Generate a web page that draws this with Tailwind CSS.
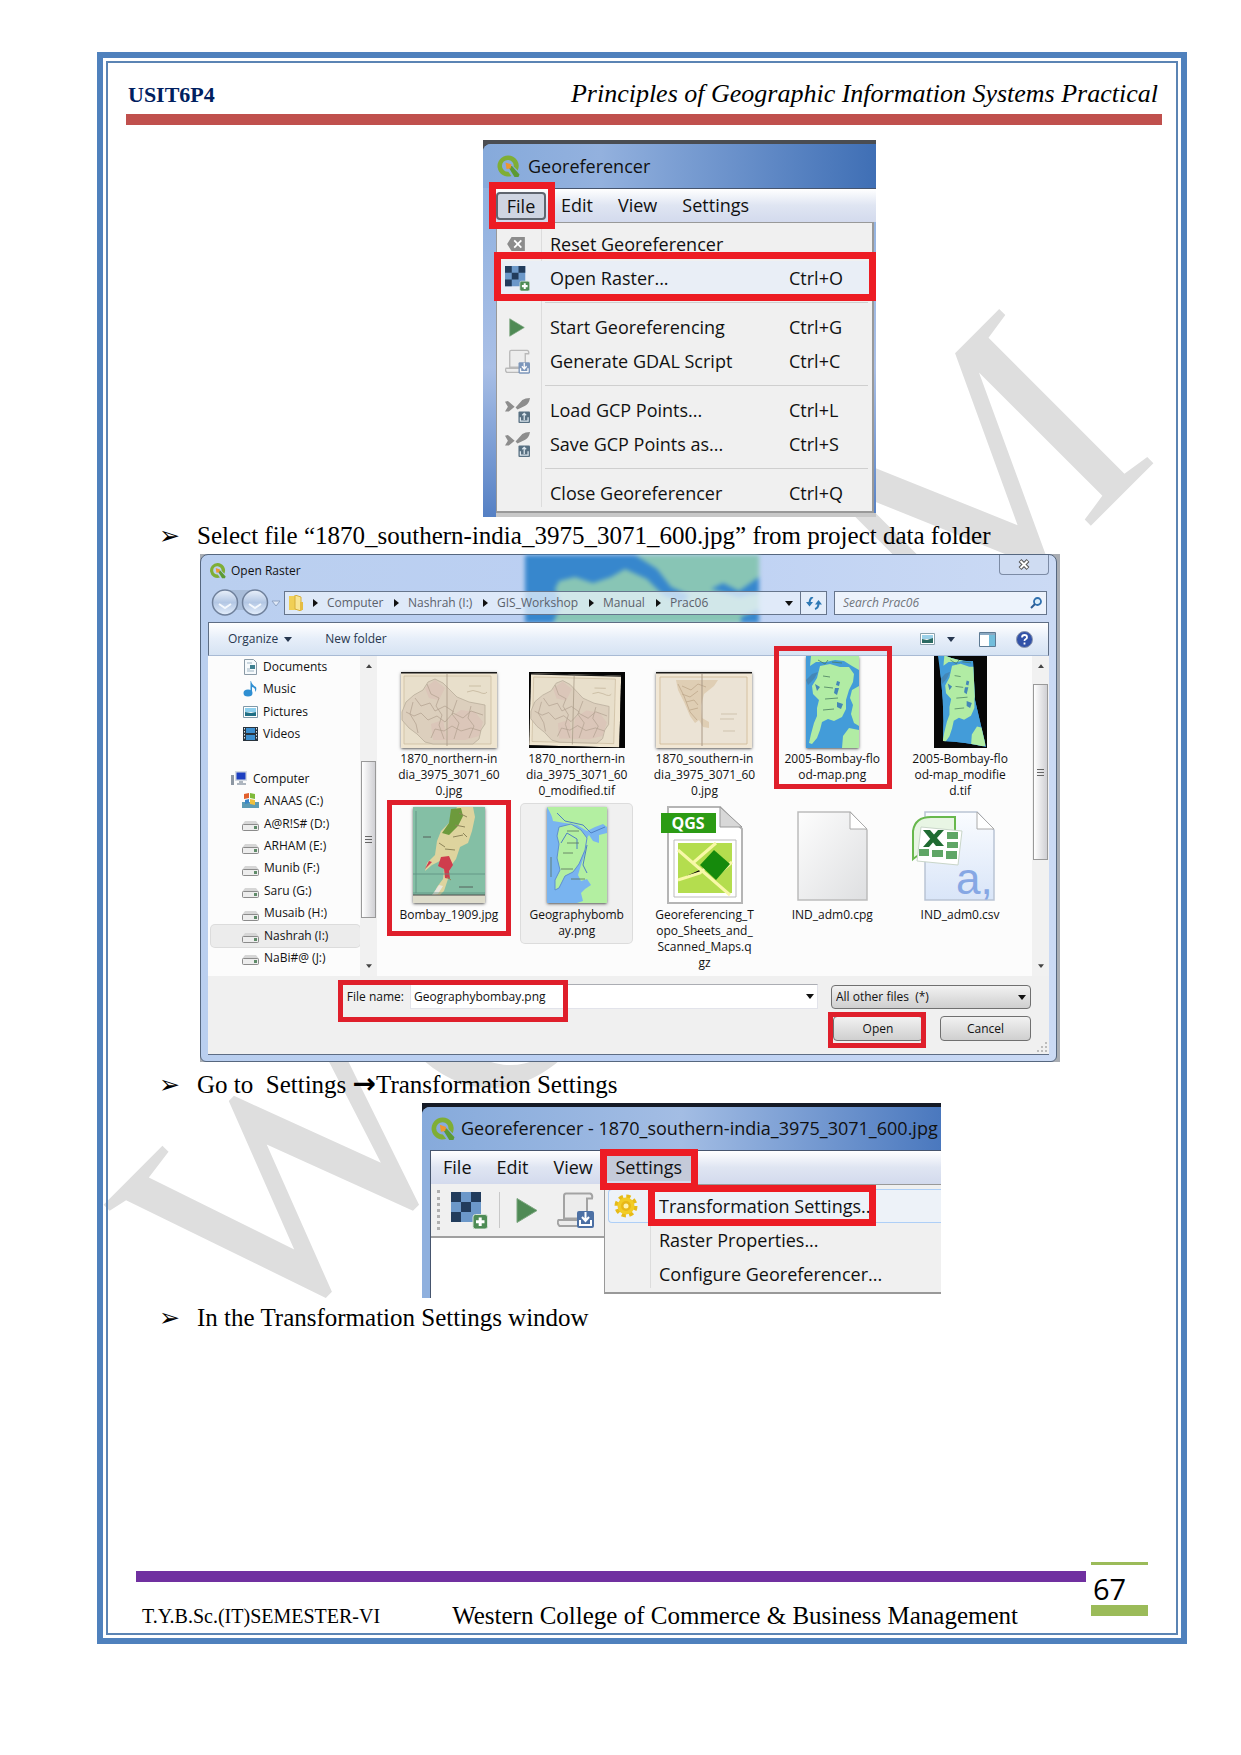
<!DOCTYPE html>
<html lang="en">
<head>
<meta charset="utf-8">
<meta name="viewport" content="width=device-width, initial-scale=1">
<title>Principles of Geographic Information Systems Practical</title>
<script src="https://cdn.jsdelivr.net/npm/@tailwindcss/browser@4"></script>
</head>
<body class="bg-white text-black font-['Liberation_Serif',serif]">

<!-- shared icons -->
<svg class="absolute size-0" aria-hidden="true">
  <defs>
    <linearGradient id="paper" x1="0" y1="0" x2="1" y2="1"><stop offset="0" stop-color="#fdfdfd"/><stop offset="1" stop-color="#dedfe1"/></linearGradient>
    <linearGradient id="csvpaper" x1="0" y1="0" x2="0" y2="1"><stop offset="0" stop-color="#fafcff"/><stop offset="1" stop-color="#d9e5f8"/></linearGradient>
    <linearGradient id="orb" x1="0" y1="0" x2="0" y2="1"><stop offset="0" stop-color="#e9f0fa"/><stop offset=".5" stop-color="#b3c7e4"/><stop offset="1" stop-color="#e4eefc"/></linearGradient>
    <symbol id="qgis" viewBox="0 0 24 24">
      <path d="M12 1.500a10.500 10.500 0 1 0 3.500 20.400l-3.200-4.200a5.900 5.900 0 1 1 5.400-5.200l4 4A10.500 10.500 0 0 0 12 1.500z" fill="#7fae35"/>
      <path d="M12 12.500l4-.5 7.500 8.500-1 2.500h-4z" fill="#5c9a34"/>
      <path d="M9.500 8.500l6 2-1 4-4 .5z" fill="#f0962f"/>
    </symbol>
    <symbol id="raster" viewBox="0 0 37 37">
      <path d="M0 0h30v30H0z" fill="#6c98c9"/>
      <path d="M0 0h10v10H0zM20 0h10v10H20zM10 10h10v10H10zM0 20h10v10H0z" fill="#223c5c"/>
      <rect x="22" y="22.500" width="14.500" height="14.500" rx="2.500" fill="#4e8c55" stroke="#d5e2d6"/>
      <path d="M29.200 25.500v8.500M25 29.800h8.500" stroke="#fff" stroke-width="3"/>
    </symbol>
    <symbol id="play" viewBox="0 0 22 26"><path d="M1 1l20 12L1 25z" fill="#4f8a55" stroke="#7aa57e"/></symbol>
    <symbol id="script" viewBox="0 0 37 36">
      <path d="M9 1.500h24q3 1 2 5h-5v20H7V4q0-2.500 2-2.500zM1.500 28h21v6h-20q-3-3-1-6z" fill="#ececec" stroke="#a3a3a3" stroke-width="2"/>
      <rect x="20" y="19" width="17" height="17" rx="2" fill="#4c70a4"/>
      <path d="M23 28v5h11v-5M28.500 20v8M25 25l3.500 4 3.500-4" fill="none" stroke="#fff" stroke-width="2"/>
    </symbol>
    <symbol id="reset" viewBox="0 0 22 18"><path d="M6 1h15v16H6L1 9z" fill="#8c8c8c"/><path d="M9 5l8 8M17 5l-8 8" stroke="#fff" stroke-width="2"/></symbol>
    <symbol id="gcp" viewBox="0 0 26 26">
      <path d="M0 4l3-1 7 6-6 5H0l3-5zM11 10l7-8q3-2 8-2-1 6-5 8l-8 4z" fill="#8d8d8d"/>
      <rect x="14" y="14" width="12" height="12" rx="1" fill="#587082"/>
      <path d="M16 20v4h8v-4M20 23v-7M18 18l2-2 2 2" fill="none" stroke="#dbe6ee" stroke-width="1.300"/>
    </symbol>
    <symbol id="gear" viewBox="0 0 24 24">
      <circle cx="12" cy="12" r="9.500" fill="none" stroke="#e6bb18" stroke-width="4" stroke-dasharray="4.200 3.260"/>
      <circle cx="12" cy="12" r="8.500" fill="#f2cc25"/><circle cx="12" cy="12" r="5" fill="#e8b818"/><circle cx="12" cy="12" r="2.500" fill="#fff3b0"/>
    </symbol>
    <symbol id="drive" viewBox="0 0 17 11"><path d="M3 1h11l3 4v5H0V5z" fill="#d6d6d6"/><rect x=".5" y="4.500" width="16" height="6" rx="1" fill="#ededed" stroke="#8b8b8b"/><path d="M12 6h3v3h-3z" fill="#5f8b69"/></symbol>
    <symbol id="oldmap" viewBox="0 0 96 76">
      <path d="M0 0h96v76H0z" fill="#efe5d0"/><path d="M0 0h96v1.500H0z" fill="#1a1a1a"/>
      <path d="M3 4h87v68H3z" fill="#e8dfcb" stroke="#c9b99c" stroke-width=".7"/>
      <path d="M1 40l4-10 8-7 9-5 5-8 7-3 8 4 8 8 6 6 12 5 16 3v19l-4 6-2 9-6 5H32l-8-2-8-8-8-6-7-8z" fill="#dccfbd" stroke="#b9ad9b" stroke-width=".8"/>
      <path d="M48 46l12-8 14 2 8 10-4 14-14 4H46zM30 52l12-4 4 20H32zM24 16l10-8 10 8-6 12-10-2z" fill="#dabfb6" opacity=".6"/>
      <path d="M5 40l8 4 7-3 7 7 9-4 8 6 8-9 10 5 8-7 12 4M14 26l6 8 9-3 5 8 10-5 9 6M26 12l4 10 8 4-3 8 6 9-3 10 5 14M56 28l-5 14 7 9-5 16M70 34l-3 12 6 8-5 12M12 30l-3 12 6 10 2 9M30 66l4-9 9 2 8-5 9 5 10-3 10 3" fill="none" stroke="#b09f8e" stroke-width=".7"/>
      <path d="M68 14h12M66 20q6-3 12 0t8 0" stroke="#c4b69c" fill="none" stroke-width=".8"/>
      <path d="M46 2v72" stroke="#a99b88" stroke-width=".8"/>
    </symbol>
    <symbol id="southmap" viewBox="0 0 96 76">
      <path d="M0 0h96v76H0z" fill="#f1e7d5"/><path d="M0 0h96v1.500H0z" fill="#1a1a1a"/>
      <path d="M4 5h87v67H4z" fill="#ebe3d5" stroke="#cfb995" stroke-width=".8"/>
      <path d="M20 8h42l-4 6-10 8-3 12 1 12 7 4v6l-6-1-4-7-4 3-5-7-6-14-6-12z" fill="#dfceb4"/>
      <path d="M22 12l6 12 6 16 7 8M26 14l9 4 7-6 8 3M26 22l8 3 8-6M30 30l8-2 4 5M34 38l8-2" fill="none" stroke="#bfa88b" stroke-width=".8"/><path d="M46 2v72" stroke="#aa9986"/>
      <path d="M65 42h16M64 47h14M67 59h12" stroke="#c8bba5" stroke-width=".8"/>
    </symbol>
    <symbol id="bombay" viewBox="0 0 53 92">
      <path d="M0 0h53v92H0z" fill="#439cd9"/>
      <path d="M5 0h48v14l-7-4-8-5-9-1-9 2-10 0-6 4z" fill="#b1eca4"/>
      <path d="M46 34l7-4v40l-5-3-3-9 2-9-3-7zM37 80l6-8 10 2v18H36z" fill="#b1eca4"/>
      <path d="M14 10l10-2 10 3 9 0 5 7-1 8-4 8-3 10 0 9-4 8-8 4-6-2-6 3-2 8-3 8-5 6-3-1 2-9 3-11 3-7 0-8 2-8-6-6-1-8 5-8z" fill="#b1eca4"/>
      <path d="M0 24l6-6 6-2-4 7-6 6zM31 25l3 1-1 4-3-1zM29 32l4 0-2 7-3-2zM9 28l5 3-3 4zM31 46l6 2-2 5-4-2z" fill="#4487b7"/>
      <path d="M17 20l7 1M18 31l9 1M19 43l13-1M17 54l11-1M26 6l10 1M12 4l7 4 3-4" stroke="#4a7d60" stroke-width=".8" fill="none"/>
    </symbol>
    <symbol id="tri" viewBox="0 0 8 5"><path d="M0 0h8L4 5z" fill="currentColor"/></symbol>
    <symbol id="chev" viewBox="0 0 5 8"><path d="M0 0l5 4-5 4z" fill="#111"/></symbol>
  </defs>
</svg>

<div class="relative flex min-h-screen flex-col pt-[52px] pr-[54px] pb-[111px] pl-[97px]">

  <svg class="pointer-events-none absolute inset-0 h-full w-full" aria-hidden="true">
    <text x="632" y="942" text-anchor="middle" transform="rotate(-45 629 832)" font-family="Liberation Serif, serif" font-size="333" fill="#dedede">WCCBM</text>
  </svg>

  <div class="relative flex flex-1 flex-col border-[6px] border-[#4f81bd] p-[3px]">
  <div class="flex flex-1 flex-col border-2 border-[#5b84b4] pr-[14px] pl-[18px]">

    <header class="flex h-[62px] items-end justify-between border-b-[11px] border-[#c0504d] pr-1 pb-1 pl-[2px]">
      <span class="text-[22px] leading-[30px] font-bold text-[#002060]">USIT6P4</span>
      <span class="text-[26px] leading-[32px] italic">Principles of Geographic Information Systems Practical</span>
    </header>

    <main class="mt-[15px] flex-1 pl-[71px] text-[25px]">

      <!-- Georeferencer: File menu -->
      <figure class="relative mx-auto h-[377px] w-[393px] overflow-hidden bg-[#4a4d52] pt-1 font-['Open_Sans',sans-serif] text-[18px] text-[#111]">
        <div class="flex h-full flex-col rounded-tl-lg bg-linear-to-b from-[#8aaede] via-[#a9bfe6] via-60% to-[#5580c4] pl-[13px]">
          <div class="-ml-[13px] flex h-11 shrink-0 items-center gap-2 rounded-tl-lg bg-linear-to-r from-[#86aadb] via-[#93b1de] via-30% to-[#3f6fb5] pl-[13px]">
            <svg class="size-6"><use href="#qgis"/></svg><span>Georeferencer</span>
          </div>
          <div class="flex h-[34px] shrink-0 items-center border-t border-[#46556e] bg-linear-to-b from-white via-[#dfe5f2] via-50% to-[#d3daed]">
            <button class="h-7 w-[50px] rounded-sm border-2 border-[#5f656f] bg-[#cfd5e2] leading-[24px]">File</button>
            <button class="ml-[15px]">Edit</button>
            <button class="ml-[25px]">View</button>
            <button class="ml-[25px]">Settings</button>
          </div>
          <div class="relative mr-[2px] h-[291px] shrink-0 border border-r-2 border-b-2 border-[#999] bg-[#f0f0f0] py-1">
            <span class="absolute inset-y-1 left-11 w-px bg-[#dcdcdc]"></span>
            <ul class="relative leading-[34px]">
              <li class="flex h-[34px] items-center pl-2"><svg class="h-4 w-[22px]"><use href="#reset"/></svg><button class="ml-[23px]">Reset Georeferencer</button></li>
              <li class="grid h-[34px] grid-cols-[45px_239px_1fr] items-center bg-[#e9eef6] pl-2"><svg class="size-[25px]"><use href="#raster"/></svg><button class="text-left">Open Raster...</button><span>Ctrl+O</span></li>
              <li class="mr-1 ml-12 h-[15px] pt-[7px]"><div class="border-t border-[#cfcfcf]"></div></li>
              <li class="grid h-[34px] grid-cols-[45px_239px_1fr] items-center pl-2"><svg class="ml-1 h-[19px] w-4"><use href="#play"/></svg><button class="text-left">Start Georeferencing</button><span>Ctrl+G</span></li>
              <li class="grid h-[34px] grid-cols-[45px_239px_1fr] items-center pl-2"><svg class="size-[25px] opacity-70"><use href="#script"/></svg><button class="text-left">Generate GDAL Script</button><span>Ctrl+C</span></li>
              <li class="mr-1 ml-12 h-[15px] pt-[7px]"><div class="border-t border-[#cfcfcf]"></div></li>
              <li class="grid h-[34px] grid-cols-[45px_239px_1fr] items-center pl-2"><svg class="size-[25px]"><use href="#gcp"/></svg><button class="text-left">Load GCP Points...</button><span>Ctrl+L</span></li>
              <li class="grid h-[34px] grid-cols-[45px_239px_1fr] items-center pl-2"><svg class="size-[25px]"><use href="#gcp"/></svg><button class="text-left">Save GCP Points as...</button><span>Ctrl+S</span></li>
              <li class="mr-1 ml-12 h-[15px] pt-[7px]"><div class="border-t border-[#cfcfcf]"></div></li>
              <li class="grid h-[34px] grid-cols-[45px_239px_1fr] items-center pl-2"><span></span><button class="text-left">Close Georeferencer</button><span>Ctrl+Q</span></li>
            </ul>
          </div>
          <div class="flex-1 bg-[#c8c8c8]"></div>
        </div>
        <span class="absolute top-[42px] left-[6px] h-[47px] w-[66px] border-[7px] border-[#ed1c24]"></span>
        <span class="absolute top-[112px] left-[11px] h-[49px] w-[382px] border-[7px] border-[#ed1c24]"></span>
      </figure>

      <p class="relative h-[37px] leading-[37px]"><span class="absolute -left-[38px] font-['DejaVu_Sans',sans-serif]">➢</span>Select file “1870_southern-india_3975_3071_600.jpg” from project data folder</p>

      <!-- Open Raster dialog -->
      <figure class="relative ml-[3px] h-[508px] w-[860px] overflow-hidden bg-[#a9adb3] pr-[3px] font-['Open_Sans',sans-serif] text-[12px] text-[#111]">
        <div class="relative flex h-full flex-col rounded-t-lg rounded-b-md border border-[#56677f] bg-linear-to-r from-[#bacfef] via-[#bcd0f3] to-[#cbdaf4] px-[7px] pb-[6px]">
          <svg class="absolute top-0 left-[324px] h-[68px] w-[234px] blur-[2px]" viewBox="0 0 234 68" preserveAspectRatio="none" aria-hidden="true">
            <path d="M0 0h234v68H0z" fill="#88c5b5"/>
            <path d="M0 0h110l22 14 14 18 18 8-6 8-20-8-16-16-22-10-14 8-18 6-18-6-16 4-4 8 6 16-8 18H0zM186 34l12-6 16 8 20-14v16l-20 4zM216 62l18-8v14h-18z" fill="#3787cd"/>
          </svg>

          <div class="relative flex h-9 shrink-0 items-start justify-between">
            <div class="flex h-[31px] items-center gap-[5px] pl-[1px]"><svg class="size-[17px]"><use href="#qgis"/></svg><span>Open Raster</span></div>
            <button aria-label="Close" class="flex h-5 w-[50px] items-center justify-center rounded-b-sm border border-t-0 border-[#7c8ba5] bg-[#cfdcf2]">
              <svg class="h-[11px] w-3" viewBox="0 0 12 11"><path d="M2 1.500l8 8M10 1.500l-8 8" stroke="#555" stroke-width="4"/><path d="M2.500 2l7 7M9.500 2l-7 7" stroke="#fff" stroke-width="2"/></svg>
            </button>
          </div>

          <div class="relative flex h-[31px] shrink-0 items-start text-[#5b616b]">
            <svg class="ml-[3px] -mt-0.5 h-[27px] w-[73px] shrink-0" viewBox="0 0 73 27" aria-label="Back and forward">
              <path d="M13 1h30v20H13z" fill="#a9bdd9"/>
              <circle cx="14" cy="13.500" r="12.500" fill="url(#orb)" stroke="#6f809b" stroke-width="1.500"/><circle cx="44" cy="13.500" r="12.500" fill="url(#orb)" stroke="#6f809b" stroke-width="1.500"/>
              <path d="M8 15l6 4 6-4M38 15l6 4 6-4" fill="none" stroke="#f4f8fd" stroke-width="2"/><path d="M61 12h8l-4 5z" fill="#dfe8f6" stroke="#90a4c4"/>
            </svg>
            <div class="flex h-6 w-[543px] items-center border border-[#66758c] bg-[#eaf1fb]/75 pl-1">
              <svg class="h-4 w-[15px]" viewBox="0 0 15 16"><path d="M0 1h7v14H0z" fill="#f0cf55"/><path d="M6 0l6 2v14l-6-2z" fill="#f8e594" stroke="#d6ae3a"/><path d="M11 7h3v8h-3z" fill="#e5bd43"/></svg>
              <ol class="ml-[9px] grid grid-cols-[81px_89px_106px_67px_1fr]">
                <li class="flex items-center gap-[9px]"><svg class="h-2 w-[5px]"><use href="#chev"/></svg><a href="#">Computer</a></li>
                <li class="flex items-center gap-[9px]"><svg class="h-2 w-[5px]"><use href="#chev"/></svg><a href="#">Nashrah (I:)</a></li>
                <li class="flex items-center gap-[9px]"><svg class="h-2 w-[5px]"><use href="#chev"/></svg><a href="#">GIS_Workshop</a></li>
                <li class="flex items-center gap-[9px]"><svg class="h-2 w-[5px]"><use href="#chev"/></svg><a href="#">Manual</a></li>
                <li class="flex items-center gap-[9px]"><svg class="h-2 w-[5px]"><use href="#chev"/></svg><a href="#">Prac06</a></li>
              </ol>
              <svg class="mr-[7px] ml-auto h-[5px] w-2 text-[#111]"><use href="#tri"/></svg>
              <button aria-label="Refresh" class="flex h-full w-[26px] items-center justify-center border-l border-[#66758c] bg-[#e3edfa]">
                <svg class="h-[13px] w-4" viewBox="0 0 16 13"><path d="M7 0Q3.500 1 3.500 7M9 12q3.500-1 3.500-6" fill="none" stroke="#2e79b5" stroke-width="2"/><path d="M0 5h7L3.500 9.500zM9 7.500h7L12.500 3z" fill="#2e79b5"/></svg>
              </button>
            </div>
            <label class="ml-[7px] flex h-6 w-[213px] items-center border border-[#66758c] bg-[#edf3fc] pr-1 pl-2">
              <input type="text" aria-label="Search" placeholder="Search Prac06" class="min-w-0 flex-1 italic placeholder:text-[#70757d]">
              <svg class="size-3" viewBox="0 0 12 12"><circle cx="7.500" cy="4.500" r="3.500" fill="#dceefa" stroke="#2f6fae" stroke-width="1.800"/><path d="M5 7l-4 4" stroke="#2c5c93" stroke-width="2"/></svg>
            </label>
          </div>

          <div class="relative flex h-[34px] shrink-0 items-center border border-[#5e6d84] border-b-[#a8bad4] bg-linear-to-b from-white via-[#e6eef9] via-50% to-[#d6e3f3] pl-[19px] text-[#27374f]">
            <button class="flex items-center gap-[6px]">Organize <svg class="h-[5px] w-2"><use href="#tri"/></svg></button>
            <button class="ml-[33px]">New folder</button>
            <svg class="ml-auto h-3 w-[15px]" viewBox="0 0 15 12"><path d="M.5.5h14v11H.5z" fill="#fff" stroke="#8ba3ae"/><path d="M2 2h11v4H2z" fill="#9bd0e8"/><path d="M2 6l5 1 6-2v5H2z" fill="#2b6a62"/></svg>
            <svg class="ml-3 h-[5px] w-2"><use href="#tri"/></svg>
            <svg class="ml-6 h-[15px] w-[17px]" viewBox="0 0 17 15"><path d="M.5.5h16v14H.5z" fill="#fff" stroke="#5d7a93"/><path d="M1 1h15v2H1z" fill="#8ba9c2"/><path d="M10 3h6v11h-6z" fill="#72bddb"/></svg>
            <svg class="mr-[15px] ml-5 size-[17px]" viewBox="0 0 17 17"><circle cx="8.500" cy="8.500" r="8" fill="#3252a8" stroke="#8d97ac"/><path d="M6 6.500q0-2.500 2.500-2.500t2.500 2.200q0 1.300-1.500 2-1 .5-1 1.800M8.500 11.500v2" fill="none" stroke="#fff" stroke-width="1.800"/></svg>
          </div>

          <div class="flex h-[320px] shrink-0 bg-[#fcfcfc]">
            <ul class="flex w-[152px] flex-col justify-between pb-[7px] pl-[3px] leading-[22px]">
              <li class="flex h-[22px] items-center gap-[5px] pl-[32px]"><svg class="h-4 w-[15px]" viewBox="0 0 15 16"><path d="M1.500.5h9l3 3v12h-12z" fill="#f6fafc" stroke="#8a9aa6"/><path d="M4 4h5M4 12h7M4 10h3" stroke="#9fb5c3"/><path d="M7 6h5v4H7z" fill="#3f8090"/></svg>Documents</li>
              <li class="flex h-[22px] items-center gap-[5px] pl-[32px]"><svg class="h-4 w-[15px]" viewBox="0 0 15 16"><ellipse cx="5" cy="12" rx="4.500" ry="3.500" fill="#2f8fd2"/><path d="M8 0q1 4 5 6 1 3-1 5 1-4-3-5v7H7.500V0z" fill="#2f8fd2"/></svg>Music</li>
              <li class="flex h-[22px] items-center gap-[5px] pl-[32px]"><svg class="h-4 w-[15px]" viewBox="0 0 15 16"><path d="M.5 2.500h14v11H.5z" fill="#fff" stroke="#7f99a9"/><path d="M2 4h11v4H2z" fill="#8ed0ee"/><path d="M2 8l6 1 5-1v4H2z" fill="#1f6f86"/></svg>Pictures</li>
              <li class="flex h-[22px] items-center gap-[5px] pl-[32px]"><svg class="h-4 w-[15px]" viewBox="0 0 15 16"><path d="M0 1h15v14H0z" fill="#28333d"/><path d="M3 2h9v5H3zM3 9h9v5H3z" fill="#3c8fd0"/><path d="M1.500 2v12M13.500 2v12" stroke="#dfe6ea" stroke-dasharray="1.500 1.500"/></svg>Videos</li>
              <li class="h-[22px]" aria-hidden="true"></li>
              <li class="flex h-[22px] items-center gap-[5px] pl-[20px]"><svg class="h-[15px] w-[17px]" viewBox="0 0 17 15"><path d="M4 0h12v10H4z" fill="#d4dae1"/><path d="M5.500 1.500h9v7h-9z" fill="#1d3fc0"/><path d="M8 10h4v2h3v2H6v-2h2z" fill="#aeb6bf"/><path d="M0 4h3v10H0z" fill="#8d97a3"/></svg>Computer</li>
              <li class="flex h-[22px] items-center gap-[5px] pl-[31px]"><svg class="h-4 w-[17px]" viewBox="0 0 17 16"><path d="M0 9h17v6H0z" fill="#5c9bb4"/><path d="M2 1l5-1v5l-5 1z" fill="#e2602e"/><path d="M8 0l5 1v5L8 5z" fill="#7fba3a"/><path d="M3 7l4-1v4l-4 1z" fill="#3a86c8"/><path d="M8 6l5 1v5l-5-1z" fill="#efc03c"/></svg>ANAAS (C:)</li>
              <li class="flex h-[22px] items-center gap-[5px] pl-[31px]"><svg class="mt-1 h-[11px] w-[17px]"><use href="#drive"/></svg>A@R!S# (D:)</li>
              <li class="flex h-[22px] items-center gap-[5px] pl-[31px]"><svg class="mt-1 h-[11px] w-[17px]"><use href="#drive"/></svg>ARHAM (E:)</li>
              <li class="flex h-[22px] items-center gap-[5px] pl-[31px]"><svg class="mt-1 h-[11px] w-[17px]"><use href="#drive"/></svg>Munib (F:)</li>
              <li class="flex h-[22px] items-center gap-[5px] pl-[31px]"><svg class="mt-1 h-[11px] w-[17px]"><use href="#drive"/></svg>Saru (G:)</li>
              <li class="flex h-[22px] items-center gap-[5px] pl-[31px]"><svg class="mt-1 h-[11px] w-[17px]"><use href="#drive"/></svg>Musaib (H:)</li>
              <li class="flex h-[22px] items-center gap-[5px] rounded-sm bg-[#ececec] pl-[31px] ring-1 ring-[#dcdcdc]"><svg class="mt-1 h-[11px] w-[17px]"><use href="#drive"/></svg>Nashrah (I:)</li>
              <li class="flex h-[22px] items-center gap-[5px] pl-[31px]"><svg class="mt-1 h-[11px] w-[17px]"><use href="#drive"/></svg>NaBi#@ (J:)</li>
            </ul>

            <div class="flex w-[17px] flex-col items-center bg-[#f1f1f1] py-2" aria-hidden="true">
              <svg class="h-1 w-[6px] rotate-180 text-[#444]"><use href="#tri"/></svg>
              <div class="mt-[93px] flex h-[157px] w-[15px] flex-col items-center justify-center gap-[2px] border border-[#999] bg-linear-to-r from-white to-[#d0d0d4]"><i class="h-px w-[7px] bg-[#666]"></i><i class="h-px w-[7px] bg-[#666]"></i><i class="h-px w-[7px] bg-[#666]"></i></div>
              <svg class="mt-auto h-1 w-[6px] text-[#444]"><use href="#tri"/></svg>
            </div>

            <div class="flex-1 px-2 text-center leading-4">
              <ul class="grid h-[144px] grid-cols-5">
                <li class="flex flex-col items-center"><div class="flex h-[95px] shrink-0 items-end pb-[3px]"><svg class="h-[76px] w-24 shadow-sm shadow-black/50"><use href="#oldmap"/></svg></div>1870_northern-in<br>dia_3975_3071_60<br>0.jpg</li>
                <li class="flex flex-col items-center"><div class="flex h-[95px] shrink-0 items-end pb-[3px]"><svg class="h-[76px] w-24" viewBox="0 0 96 76"><path d="M0 0h96v76H0z" fill="#050505"/><g transform="rotate(1.500) translate(2 1) scale(.94 .95)"><use href="#oldmap" width="96" height="76"/></g></svg></div>1870_northern-in<br>dia_3975_3071_60<br>0_modified.tif</li>
                <li class="flex flex-col items-center"><div class="flex h-[95px] shrink-0 items-end pb-[3px]"><svg class="h-[76px] w-24 shadow-sm shadow-black/50"><use href="#southmap"/></svg></div>1870_southern-in<br>dia_3975_3071_60<br>0.jpg</li>
                <li class="flex flex-col items-center"><div class="flex h-[95px] shrink-0 items-end pb-[3px]"><svg class="h-[92px] w-[53px] shadow-sm shadow-black/50"><use href="#bombay"/></svg></div>2005-Bombay-flo<br>od-map.png</li>
                <li class="flex flex-col items-center"><div class="flex h-[95px] shrink-0 items-end pb-[3px]"><svg class="h-[92px] w-[53px]" viewBox="0 0 53 92"><defs><clipPath id="warp"><path d="M4 0h8q14 6 27 5l2 39 11 47q-20-5-43-6 2-40-5-85z"/></clipPath></defs><path d="M0 0h53v92H0z" fill="#080808"/><g clip-path="url(#warp)"><path d="M0 0h53v92H0z" fill="#439cd9"/><g transform="translate(6 0) scale(.86 .98)"><use href="#bombay" width="53" height="92"/></g></g></svg></div>2005-Bombay-flo<br>od-map_modifie<br>d.tif</li>
              </ul>
              <ul class="grid grid-cols-5">
                <li class="flex flex-col items-center"><div class="flex h-[107px] shrink-0 items-end pb-1"><svg class="h-24 w-[72px] shadow-sm shadow-black/50" viewBox="0 0 72 96"><path d="M0 0h72v96H0z" fill="#84bfa5"/><path d="M44 0h16l2 10-3 14-4 12-8 4-4 12-6 8-2 12-4 12-6 6-5 0 4-10 6-8 1-10-4-8-8 4-7 6 2-8 8-8 2-14 4-10 8-8z" fill="#ded49e"/><path d="M38 2l10-1 2 8-5 10-9 9-7-2 7-10z" fill="#6d9a3c"/><path d="M28 50l8-1 4 9-4 6 1 8-5-1-1-9-6-3zM12 62l4-8 3 1z" fill="#cf3d4d"/><path d="M26 78l-7 10 6-1 5-8z" fill="#e9e6dc"/><path d="M46 6l8 4M42 18l10 2M40 30l10-2M32 42l10 1M26 36l6 4M50 26l4 4M34 70l4 3" stroke="#8d8459" stroke-width="1"/><path d="M0 67h72M0 86h72M3 4v82" stroke="#5d9182" stroke-width=".8"/><path d="M0 88h72v8H0z" fill="#dedccb"/><path d="M0 88h72" stroke="#444"/><path d="M46 80h14M10 30h8" stroke="#55615a"/></svg></div>Bombay_1909.jpg</li>
                <li class="flex flex-col items-center"><div class="mt-1 flex h-[139px] w-[111px] flex-col items-center rounded-sm bg-[#f0f0f0] ring-1 ring-[#dcdcdc]"><div class="flex h-[103px] shrink-0 items-end pb-1"><svg class="h-24 w-[60px] shadow-sm shadow-black/50" viewBox="0 0 60 96"><path d="M0 0h60v96H0z" fill="#b3efa1"/><path d="M0 0q5 8 6 14l12 2 12 2 10 6 8-4 8-3 4 3v6l-8 2 0 8-6-2-4-6-4 6 0 12-4 12-3 10 3 6 6-2 4 6-6 4-4 4 2 8-6 2-2 10H0z" fill="#79b4f0"/><path d="M12 20l12-3 10 6 6 8-2 12-6 14-6 8-8 4-6 12-4 2 0-10 5-10-3-12 2-14-2-8z" fill="#b3efa1" stroke="#5f8fd0"/><path d="M10 6l8 8 18 4 8 8 14-6M14 36l6-10 10 6 0 10M40 38l-4 20 4 8" fill="none" stroke="#4f80c4" stroke-width="1"/><path d="M20 24h12M20 36h12M16 46h10M14 62h12M24 72h14M4 50v20" stroke="#58715c" stroke-width=".8"/></svg></div>Geographybomb<br>ay.png</div></li>
                <li class="flex flex-col items-center"><div class="mr-[5px] flex h-[107px] shrink-0 items-end pb-[3px]"><svg class="h-[98px] w-[84px]" viewBox="0 0 84 98"><path d="M8 1h52l22 22v74H8z" fill="#fff" stroke="#b5b5b5" stroke-width="2"/><path d="M60 1v20h22z" fill="#d8d8d8" stroke="#9a9a9a"/><path d="M14 34h62v57H14z" fill="#fff" stroke="#bbb"/><path d="M18 37h54v50H18z" fill="#b4dd4e"/><path d="M18 44l52 45M34 56L56 37M18 74l22-7 6-6M56 70l16-14" stroke="#f8f8a8" stroke-width="3"/><path d="M54 44l16 14-14 16-16-15z" fill="#158a0c"/><path d="M1 7h55v20H1z" fill="#2c9b14"/><text x="28" y="23" text-anchor="middle" font-family="Open Sans, sans-serif" font-weight="700" font-size="16" fill="#fff">QGS</text></svg></div>Georeferencing_T<br>opo_Sheets_and_<br>Scanned_Maps.q<br>gz</li>
                <li class="flex flex-col items-center"><div class="flex h-[107px] shrink-0 items-end pb-[6px]"><svg class="h-[90px] w-[71px]" viewBox="0 0 71 90"><path d="M1 1h52l17 18v70H1z" fill="url(#paper)" stroke="#bcbcbc" stroke-width="1.500"/><path d="M53 1v17h17z" fill="#fff" stroke="#aaa"/></svg></div>IND_adm0.cpg</li>
                <li class="flex flex-col items-center"><div class="mr-[15px] flex h-[107px] shrink-0 items-end pb-[6px]"><svg class="h-[90px] w-[84px]" viewBox="0 0 84 90"><path d="M14 1h52l17 18v70H14z" fill="url(#csvpaper)" stroke="#b9c3d4" stroke-width="1.500"/><path d="M66 1v17h17z" fill="#fff" stroke="#aaa"/><text x="45" y="83" font-family="Liberation Sans, sans-serif" font-size="44" fill="#86a7e4">a,</text><path d="M2 48V20Q4 6 20 6h24v36Q14 38 2 48z" fill="#e8f5e4" stroke="#68b84d" stroke-width="2"/><path d="M10 16l41 4-4 34-41-4z" fill="#fff" stroke="#c9d6c9"/><path d="M36 21h11v7H36zM36 31h11v6H36zM35 40h11v8H35zM21 39h11v7H21zM8 38h10v7H8z" fill="#5fa666"/><path d="M12 19h7l14 16h-8zM27 19h6L18 36h-6z" fill="#1f6b32"/></svg></div>IND_adm0.csv</li>
              </ul>
            </div>

            <div class="flex w-[17px] flex-col items-center bg-[#f1f1f1] py-2" aria-hidden="true">
              <svg class="h-1 w-[6px] rotate-180 text-[#444]"><use href="#tri"/></svg>
              <div class="mt-4 flex h-[176px] w-[15px] flex-col items-center justify-center gap-[2px] border border-[#999] bg-linear-to-r from-white to-[#d0d0d4]"><i class="h-px w-[7px] bg-[#666]"></i><i class="h-px w-[7px] bg-[#666]"></i><i class="h-px w-[7px] bg-[#666]"></i></div>
              <svg class="mt-auto h-1 w-[6px] text-[#444]"><use href="#tri"/></svg>
            </div>
          </div>

          <div class="relative flex-1 border-b border-[#5e6d84] bg-[#f0f0f0] pt-2 pr-[18px]">
            <div class="flex items-center justify-end">
              <label for="fname" class="mr-[6px]">File name:</label>
              <div class="flex h-[25px] w-[408px] items-center border border-[#e2e3ea] border-t-[#abadb3] bg-white pr-[3px] pl-[3px]">
                <input id="fname" type="text" value="Geographybombay.png" class="min-w-0 flex-1"><svg class="h-[5px] w-2"><use href="#tri"/></svg>
              </div>
              <div class="relative ml-[13px]">
                <select aria-label="File type" class="h-6 w-[200px] appearance-none rounded-sm border border-[#707070] bg-linear-to-b from-[#f2f2f2] to-[#cfcfcf] pl-1"><option>All other files &nbsp;(*)</option></select>
                <svg class="pointer-events-none absolute top-[10px] right-[5px] h-[5px] w-2"><use href="#tri"/></svg>
              </div>
            </div>
            <div class="mt-[7px] flex justify-end gap-[17px]">
              <button class="h-[25px] w-[90px] rounded-sm border border-[#707070] bg-linear-to-b from-[#f2f2f2] to-[#cfcfcf]">Open</button>
              <button class="h-[25px] w-[91px] rounded-sm border border-[#707070] bg-linear-to-b from-[#f2f2f2] to-[#cfcfcf]">Cancel</button>
            </div>
            <svg class="absolute right-[2px] bottom-[2px] size-[10px]" viewBox="0 0 10 10" aria-hidden="true"><path d="M8 0h2v2H8zM4 4h2v2H4zM8 4h2v2H8zM0 8h2v2H0zM4 8h2v2H4zM8 8h2v2H8z" fill="#bcbcbc"/></svg>
          </div>
        </div>
        <span class="absolute top-[92px] left-[574px] h-[143px] w-[118px] border-[5px] border-[#df1f2b]"></span>
        <span class="absolute top-[246px] left-[187px] h-[136px] w-[124px] border-[5px] border-[#df1f2b]"></span>
        <span class="absolute top-[426px] left-[138px] h-[42px] w-[230px] border-[5px] border-[#df1f2b]"></span>
        <span class="absolute top-[458px] left-[628px] h-9 w-[98px] border-[5px] border-[#df1f2b]"></span>
      </figure>

      <p class="relative h-[41px] leading-[45px]"><span class="absolute -left-[38px] font-['DejaVu_Sans',sans-serif]">➢</span>Go to &nbsp;Settings <span class="font-['DejaVu_Sans',sans-serif] text-[28px] leading-none font-bold">→</span>Transformation Settings</p>

      <!-- Georeferencer: Settings menu -->
      <figure class="relative ml-[225px] h-[195px] w-[519px] overflow-hidden bg-[#161b26] pt-1 font-['Open_Sans',sans-serif] text-[18px] text-[#111]">
        <div class="flex h-full flex-col rounded-tl-lg bg-[#8fb0de] pl-2">
          <div class="-ml-2 flex h-[43px] shrink-0 items-center gap-[6px] rounded-tl-lg bg-linear-to-r from-[#86aadb] via-[#a3bde4] to-[#4a78be] pl-2">
            <svg class="size-[25px] shrink-0"><use href="#qgis"/></svg><span class="whitespace-nowrap">Georeferencer - 1870_southern-india_3975_3071_600.jpg</span>
          </div>
          <div class="flex h-[34px] shrink-0 items-center border-t border-l border-[#46556e] bg-linear-to-b from-white via-[#dfe5f2] via-50% to-[#d3daed] pl-3">
            <button>File</button><button class="ml-[25px]">Edit</button><button class="ml-[25px]">View</button>
            <button class="ml-[13px] h-[27px] w-[86px] bg-[#c4cad9]">Settings</button>
          </div>
          <div class="flex flex-1 border-l border-[#46556e] bg-white">
            <div class="w-[173px]">
              <div class="flex h-[54px] items-center border-b-2 border-[#a0a0a0] bg-[#f0f0f0] pl-[6px]">
                <i class="h-10 border-l-[3px] border-dotted border-[#b0b0b0]"></i>
                <button aria-label="Open raster" class="ml-[11px]"><svg class="size-[37px]"><use href="#raster"/></svg></button>
                <i class="ml-[11px] h-9 w-px bg-[#c8c8c8]"></i>
                <button aria-label="Start georeferencing" class="ml-4"><svg class="h-[27px] w-[22px]"><use href="#play"/></svg></button>
                <button aria-label="Generate GDAL script" class="ml-[19px]"><svg class="h-9 w-[37px]"><use href="#script"/></svg></button>
              </div>
            </div>
            <div class="relative h-[110px] flex-1 border border-r-0 border-b-2 border-[#999] bg-[#f0f0f0] pt-[4px] pl-[3px]">
              <span class="absolute top-1 bottom-1 left-[45px] w-px bg-[#dcdcdc]"></span>
              <ul class="relative">
                <li class="flex h-[34px] items-center rounded-l-sm border border-r-0 border-[#aecff7] bg-[#edf2f8] pl-[5px]"><svg class="size-6"><use href="#gear"/></svg><button class="ml-[21px]">Transformation Settings..</button></li>
                <li class="flex h-[34px] items-center pl-[51px]"><button>Raster Properties...</button></li>
                <li class="flex h-[34px] items-center pl-[51px]"><button>Configure Georeferencer...</button></li>
              </ul>
            </div>
          </div>
        </div>
        <span class="absolute top-[46px] left-[178px] h-[41px] w-[98px] border-[7px] border-[#ed1c24]"></span>
        <span class="absolute top-[82px] left-[226px] h-[41px] w-[228px] border-[7px] border-[#ed1c24]"></span>
      </figure>

      <p class="relative h-[41px] leading-[39px]"><span class="absolute -left-[38px] font-['DejaVu_Sans',sans-serif]">➢</span>In the Transformation Settings window</p>
    </main>

    <footer class="flex items-start gap-[5px] pr-[14px] pl-[10px]">
      <div class="mt-[9px] flex-1 border-t-[11px] border-[#7030a0]">
        <div class="flex h-[51px] items-center gap-[72px] pt-4 pl-[6px] whitespace-nowrap">
          <span class="text-[20px]">T.Y.B.Sc.(IT)SEMESTER-VI</span>
          <span class="text-[25px]">Western College of Commerce &amp; Business Management</span>
        </div>
      </div>
      <div class="w-[57px] border-t-[3px] border-b-[11px] border-[#9bbb59] pt-2 pl-[2px] font-['Open_Sans',sans-serif] text-[29px] leading-[32px]">67</div>
    </footer>
  </div>
  </div>
</div>
</body>
</html>
